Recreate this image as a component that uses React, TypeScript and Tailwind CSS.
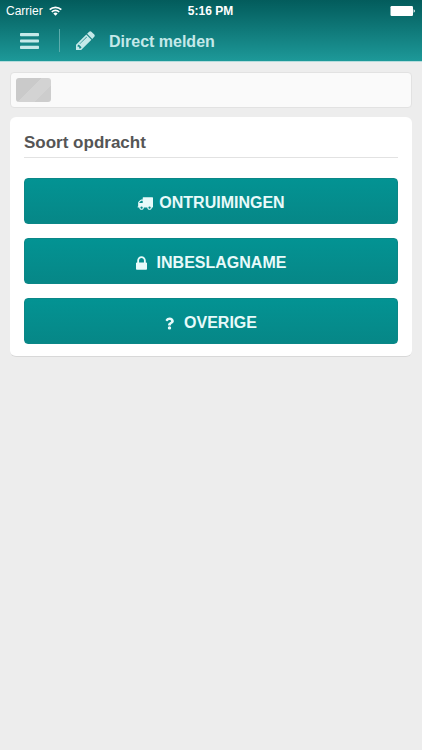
import React from "react";
import { FaQuestion } from "react-icons/fa";

type IconProps = { className?: string };

function WifiIcon({ className }: IconProps) {
  return (
    <svg viewBox="0 0 13 10" className={className} fill="none" stroke="currentColor" aria-hidden="true">
      <path d="M0.7 3.7a8.2 8.2 0 0 1 11.6 0" strokeWidth="1.8" />
      <path d="M2.8 6a5.2 5.2 0 0 1 7.4 0" strokeWidth="1.7" />
      <path d="M6.5 9.8 4.3 7.6a3.1 3.1 0 0 1 4.4 0z" fill="currentColor" stroke="none" />
    </svg>
  );
}

function BatteryIcon({ className }: IconProps) {
  return (
    <svg viewBox="0 0 25 10" className={className} fill="currentColor" aria-hidden="true">
      <rect x="0.5" width="22.5" height="10" rx="1.2" />
      <path d="M23.6 3.3q1.3.4 1.3 1.7t-1.3 1.7z" />
    </svg>
  );
}

function BarsIcon({ className }: IconProps) {
  return (
    <svg viewBox="0 0 20 16" className={className} fill="currentColor" aria-hidden="true">
      <rect width="19" height="3.2" rx="0.8" />
      <rect y="6.4" width="19" height="3.2" rx="0.8" />
      <rect y="12.8" width="19" height="3.2" rx="0.8" />
    </svg>
  );
}

function PencilIcon({ className }: IconProps) {
  return (
    <svg viewBox="0 0 1536 1536" className={className} fill="currentColor" aria-hidden="true">
      <path d="M363 1408l91-91-235-235-91 91v107h128v128h107zm523-928q0-22-22-22-10 0-17 7l-542 542q-7 7-7 17 0 22 22 22 10 0 17-7l542-542q7-7 7-17zm-54-192l416 416-832 832h-416v-416zm683 96q0 53-37 90l-166 166-416-416 166-165q36-38 90-38 53 0 91 38l235 234q37 39 37 91z" />
    </svg>
  );
}

function TruckIcon({ className }: IconProps) {
  return (
    <svg viewBox="0 0 1792 1792" className={className} fill="currentColor" aria-hidden="true">
      <path d="M640 1408q0-52-38-90t-90-38-90 38-38 90 38 90 90 38 90-38 38-90zm-384-512h384v-256h-158q-13 0-22 9l-195 195q-9 9-9 22v30zm1280 512q0-52-38-90t-90-38-90 38-38 90 38 90 90 38 90-38 38-90zm256-1088v1024q0 15-4 26.5t-13.5 18.5-16.5 11.5-23.5 6-22.5 2-25.5 0-22.5-.5q0 106-75 181t-181 75-181-75-75-181h-384q0 106-75 181t-181 75-181-75-75-181h-64q-3 0-22.5.5t-25.5 0-22.5-2-23.5-6-16.5-11.5-13.5-18.5-4-26.5q0-26 19-45t45-19v-320q0-8-.5-35t0-38 2.5-34.5 6.5-37 14-30.5 22.5-30l198-198q19-19 50.5-32t58.5-13h160v-192q0-26 19-45t45-19h1024q26 0 45 19t19 45z" />
    </svg>
  );
}

function LockIcon({ className }: IconProps) {
  return (
    <svg viewBox="320 128 1152 1408" className={className} fill="currentColor" aria-hidden="true">
      <path d="M640 768h512v-192q0-106-75-181t-181-75-181 75-75 181v192zm832 96v576q0 40-28 68t-68 28h-960q-40 0-68-28t-28-68v-576q0-40 28-68t68-28h32v-192q0-184 132-316t316-132 316 132 132 316v192h32q40 0 68 28t28 68z" />
    </svg>
  );
}

const opdrachten = [
  { label: "ONTRUIMINGEN", icon: <TruckIcon className="size-4" />, gap: "gap-1.5" },
  { label: "INBESLAGNAME", icon: <LockIcon className="h-[14px] w-[11px]" />, gap: "gap-2.5" },
  { label: "OVERIGE", icon: <FaQuestion className="h-[13px] w-[9px]" aria-hidden="true" />, gap: "gap-2.5" },
];

export default function App() {
  return (
    <div className="min-h-screen bg-[#ededed] font-['Liberation_Sans',Arial,sans-serif]">
      <header className="border-b border-[#b5dcdc] bg-linear-to-b from-[#035c5c] to-[#1d9999]">
        <div className="grid h-5 grid-cols-3 items-center pt-0.5 pr-[7px] pl-1.5 text-xs text-white">
          <div className="flex items-center gap-1.5">
            <span>Carrier</span>
            <WifiIcon className="h-[10px] w-[13px]" />
          </div>
          <span className="text-center font-bold">5:16 PM</span>
          <BatteryIcon className="h-[10px] w-[25px] justify-self-end" />
        </div>
        <div className="flex h-[41px] items-center text-[#c5e9e9]">
          <button type="button" aria-label="Menu" className="flex h-full w-[59px] items-center justify-center">
            <BarsIcon className="h-4 w-5" />
          </button>
          <div className="h-[23px] w-px bg-[#5cacac]" />
          <PencilIcon className="ml-4 size-[19px]" />
          <h1 className="ml-3.5 pt-0.5 text-base leading-6 font-bold">Direct melden</h1>
        </div>
      </header>

      <main className="space-y-[9px] px-[10px] py-[10px]">
        <div className="rounded border border-[#e2e2e2] bg-[#fafafa] p-[5px]">
          <div
            role="progressbar"
            aria-label="Voortgang"
            aria-valuenow={9}
            className="h-6 w-[9%] rounded-[3px] bg-[linear-gradient(135deg,#cacaca_44%,#d3d3d3_44%,#d3d3d3_72%,#cdcdcd_72%)]"
          />
        </div>

        <section className="rounded-md border-b border-[#d8d8d8] bg-white px-3.5 pt-3 pb-3">
          <h2 className="border-b border-[#e2e2e2] pt-0.5 pb-0.5 text-[17px] leading-6 font-bold text-[#555555]">
            Soort opdracht
          </h2>
          <div className="mt-5 flex flex-col gap-3.5">
            {opdrachten.map((opdracht) => (
              <button
                key={opdracht.label}
                type="button"
                className={`flex h-[46px] items-center justify-center rounded border border-[#0b8787] bg-linear-to-b from-[#039393] to-[#068787] pt-1 text-base leading-6 font-bold text-[#e8fafa] ${opdracht.gap}`}
              >
                {opdracht.icon}
                {opdracht.label}
              </button>
            ))}
          </div>
        </section>
      </main>
    </div>
  );
}
